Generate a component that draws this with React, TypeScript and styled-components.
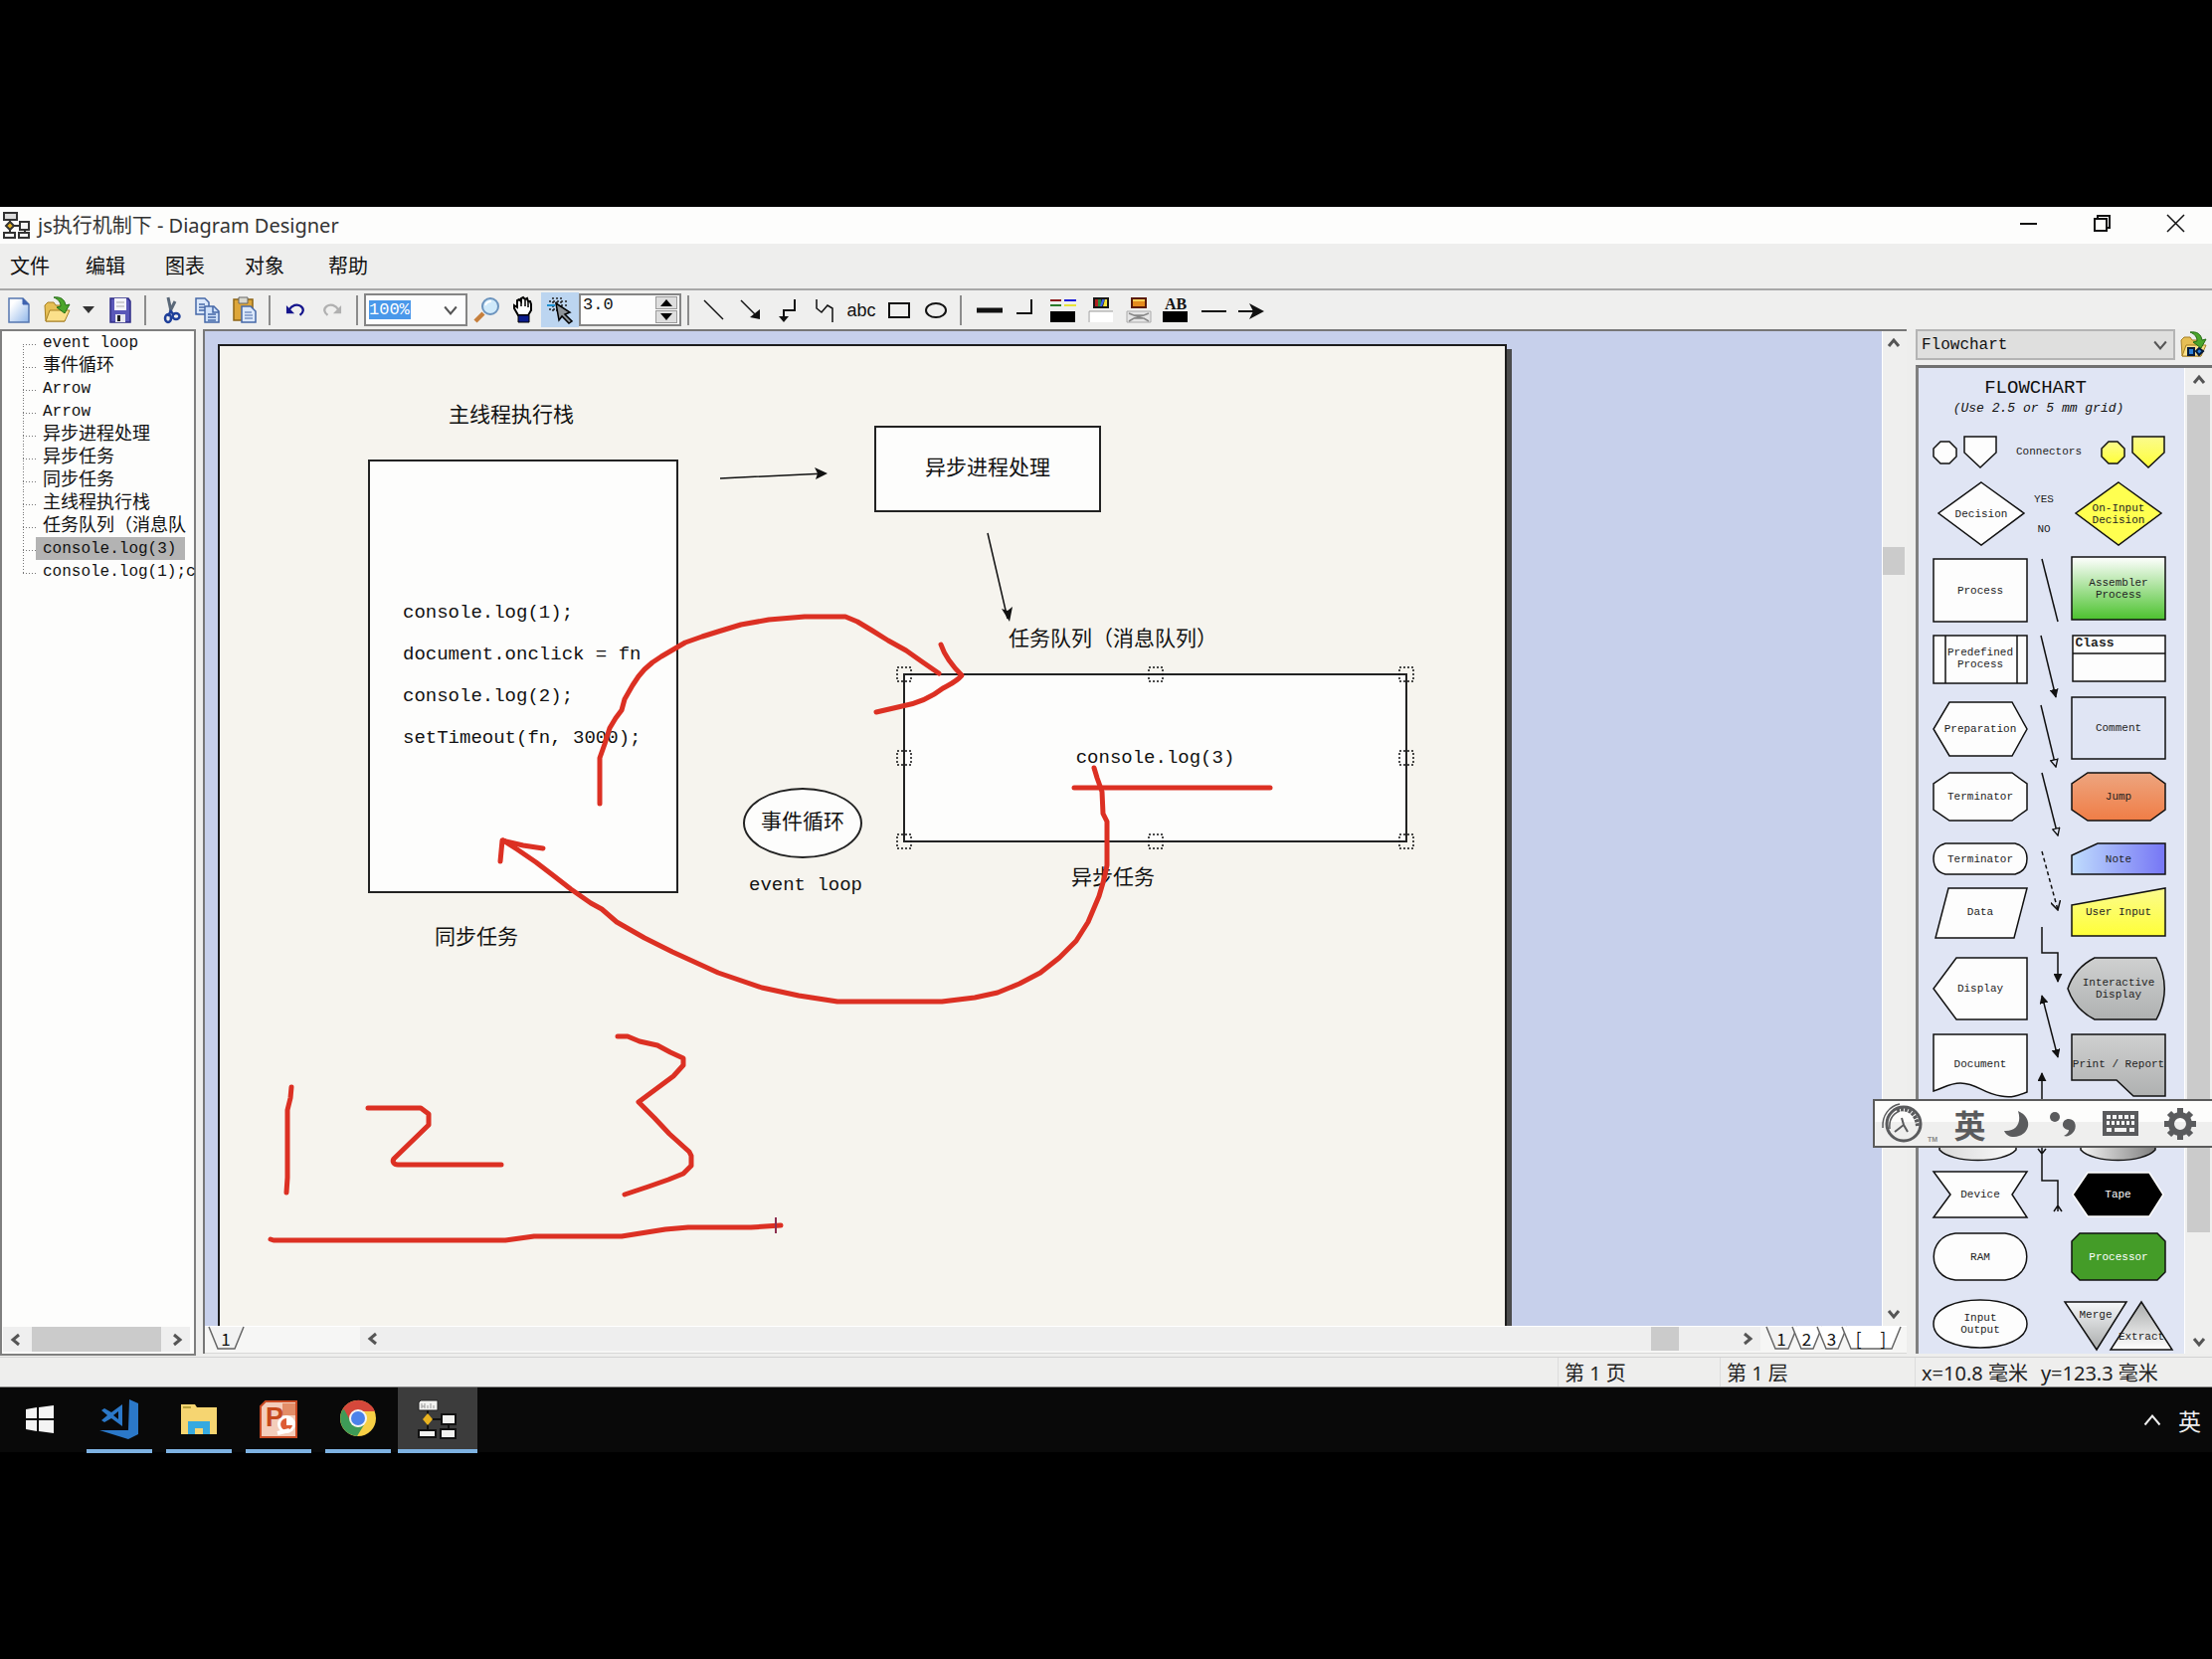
import React from "react";
import styled, { createGlobalStyle } from "styled-components";

const mono = `"Liberation Mono", "Noto Sans CJK SC", monospace`;
const sans = `"Noto Sans", "Noto Sans CJK SC", sans-serif`;

const GlobalStyle = createGlobalStyle`
  * { box-sizing: border-box; }
  body { margin: 0; background: #000; }
  button, input, select { font: inherit; color: inherit; margin: 0; padding: 0; border: 0; border-radius: 0; background: none; outline: none; }
  button { cursor: pointer; }
  svg { display: block; flex: none; overflow: visible; }
`;

/* ---------- shell ---------- */

const Screen = styled.div`
  display: flex;
  flex-direction: column;
  height: 100vh;
  min-height: 900px;
  padding: 208px 0;
  background: #000;
  font-family: ${sans};
  color: #111;
`;

const AppWindow = styled.main`
  position: relative;
  display: flex;
  flex-direction: column;
  flex: 1;
  min-height: 0;
  background: #eeeeed;
`;

const TitleBar = styled.header`
  display: flex;
  align-items: center;
  height: 37px;
  flex: none;
  padding-left: 3px;
  gap: 8px;
  background: #fdfdfc;
`;

const Title = styled.h1`
  flex: 1;
  margin: 0;
  font-size: 20px;
  line-height: 28px;
  font-weight: 400;
  color: #333;
`;

const WindowControls = styled.div`
  display: flex;
  align-self: flex-start;
`;

const WindowButton = styled.button`
  display: flex;
  align-items: center;
  justify-content: center;
  width: 74px;
  height: 32px;
`;

const MenuBar = styled.nav`
  display: flex;
  align-items: center;
  height: 47px;
  flex: none;
  padding: 0 10px;
  border-bottom: 2px solid #a8a8a8;
`;

const MenuItem = styled.button<{ $w: number }>`
  width: ${(p) => p.$w}px;
  text-align: left;
  font-size: 20px;
  line-height: 28px;
`;

/* ---------- toolbar ---------- */

const ToolBar = styled.div`
  display: flex;
  align-items: center;
  height: 39px;
  flex: none;
  background: #efefee;
`;

const Group = styled.div<{ $pad?: number }>`
  display: flex;
  align-items: center;
  padding-left: ${(p) => p.$pad ?? 0}px;
`;

const Tool = styled.button<{ $w?: number; $on?: boolean }>`
  display: flex;
  align-items: center;
  justify-content: center;
  width: ${(p) => p.$w ?? 37}px;
  height: 35px;
  font: 18px/24px "Liberation Sans", sans-serif;
  background: ${(p) => (p.$on ? "#bcd5f0" : "none")};
`;

const Divider = styled.span`
  width: 2px;
  height: 30px;
  margin: 0 6px;
  background: #8c8c8c;
`;

const Field = styled.div<{ $w: number; $pad?: number }>`
  display: flex;
  align-items: center;
  width: ${(p) => p.$w}px;
  height: 33px;
  padding: 0 ${(p) => p.$pad ?? 3}px;
  border: 2px solid #858585;
  background: #fdfdfd;
  font: 17px/20px ${mono};
`;

const ZoomInput = styled.input`
  width: 42px;
  height: 19px;
  background: #4a98ea;
  color: #fff;
`;

const FieldButton = styled.button`
  display: flex;
  align-items: center;
  justify-content: center;
  width: 24px;
  height: 26px;
  margin-left: auto;
`;

const StepInput = styled.input`
  flex: 1;
  min-width: 0;
  height: 20px;
  align-self: flex-start;
`;

const Steps = styled.span`
  display: grid;
  gap: 1px;
`;

const Step = styled.button`
  display: flex;
  align-items: center;
  justify-content: center;
  width: 22px;
  height: 13px;
  border: 1px solid #9a9a9a;
  background: #dedede;
`;

/* ---------- work area ---------- */

const Body = styled.div`
  display: flex;
  flex: 1;
  min-height: 0;
`;

const TreePanel = styled.aside`
  display: flex;
  flex-direction: column;
  width: 197px;
  flex: none;
  margin-bottom: 1px;
  border: 2px solid #7f7f7f;
  background: #fdfdfc;
`;

const Tree = styled.ul`
  flex: 1;
  margin: 0;
  padding: 0 0 0 21px;
  list-style: none;
`;

const TreeItem = styled.li<{ $first?: boolean; $last?: boolean }>`
  display: flex;
  align-items: center;
  height: 23px;
  white-space: pre;
  background:
    linear-gradient(#fdfdfc, #fdfdfc) 0 ${(p) => (p.$first ? "0" : "14px")} / 2px ${(p) => (p.$first ? "13px" : p.$last ? "9px" : "0")} no-repeat,
    repeating-linear-gradient(90deg, #777 0 1px, transparent 1px 3px) 0 13px / 14px 1px no-repeat,
    repeating-linear-gradient(#777 0 1px, transparent 1px 3px) 0 0 / 1px 100% no-repeat;
`;

const TreeLabel = styled.button<{ $cjk?: boolean; $on?: boolean }>`
  height: 23px;
  margin-left: 13px;
  padding: 0 ${(p) => (p.$on ? 9 : 0)}px 0 7px;
  font: ${(p) => (p.$cjk ? 18 : 16)}px/20px ${mono};
  text-align: left;
  white-space: pre;
  background: ${(p) => (p.$on ? "#b3b3b3" : "none")};
`;

const HBar = styled.div`
  display: flex;
  align-items: center;
  justify-content: space-between;
  height: 25px;
  margin: 0 4px 2px 1px;
  background: #efefef;
`;

const Thumb = styled.span<{ $w?: number; $h?: number }>`
  width: ${(p) => (p.$w ? p.$w + "px" : "100%")};
  height: ${(p) => (p.$h ? p.$h + "px" : "100%")};
  flex: none;
  background: #cbcbcb;
`;

const Arrow = styled.button`
  display: flex;
  align-items: center;
  justify-content: center;
  width: 26px;
  height: 24px;
  flex: none;
`;

const Editor = styled.section`
  display: grid;
  grid-template-columns: minmax(0, 1fr) 25px;
  grid-template-rows: minmax(0, 1fr) 28px;
  flex: 1;
  min-width: 0;
  margin: 0 9px 3px 7px;
  border-left: 2px solid #777;
  border-top: 2px solid #777;
`;

const Viewport = styled.div`
  padding: 13px;
  overflow: hidden;
  background: #c7d0eb;
`;

const Page = styled.div`
  position: relative;
  width: 1296px;
  height: 1833px;
  border: 2px solid #1c1c1c;
  background: #f6f4ee;
  box-shadow: 5px 5px 0 #4b4b4c;
`;

const VBar = styled.div`
  display: flex;
  flex-direction: column;
  align-items: center;
  border-left: 1px solid #fff;
  padding-right: 2px;
  background: #efefee;
`;

const Space = styled.span<{ $size?: number }>`
  flex: ${(p) => (p.$size ? `0 0 ${p.$size}px` : "1")};
`;

const TabStrip = styled.div`
  grid-column: 1 / -1;
  display: flex;
  align-items: flex-start;
  border-top: 1px solid #fff;
  border-bottom: 1px solid #d8d8d8;
  background: #f6f6f5;
`;

const SheetTabs = styled.div<{ $w: number; $pad: number }>`
  display: flex;
  width: ${(p) => p.$w}px;
  padding-left: ${(p) => p.$pad}px;
  flex: none;
`;

const TabButton = styled.button<{ $w: number }>`
  position: relative;
  width: ${(p) => p.$w}px;
  height: 23px;
  font: 17px/20px "Noto Sans CJK SC", sans-serif;
  white-space: pre;
`;

const TabShape = styled.svg`
  position: absolute;
  inset: 0;
`;

const TabText = styled.span`
  position: relative;
`;

const SheetScroll = styled.div`
  display: flex;
  align-items: center;
  flex: 1;
  height: 24px;
  background: #eeeeee;
`;

/* ---------- diagram ---------- */

interface Box {
  $x: number;
  $y: number;
  $w: number;
  $h: number;
}

const Node = styled.div<Box & { $round?: boolean; $left?: boolean }>`
  position: absolute;
  left: ${(p) => p.$x}px;
  top: ${(p) => p.$y}px;
  width: ${(p) => p.$w}px;
  height: ${(p) => p.$h}px;
  display: flex;
  align-items: center;
  justify-content: ${(p) => (p.$left ? "flex-start" : "center")};
  padding-left: ${(p) => (p.$left ? 33 : 0)}px;
  border: 2px solid #222;
  border-radius: ${(p) => (p.$round ? "50%" : "0")};
  background: #fdfdfc;
`;

const Text = styled.span<{ $cjk?: boolean }>`
  font: ${(p) => (p.$cjk ? 21 : 19)}px/24px ${mono};
  white-space: nowrap;
`;

const Caption = styled(Text)<{ $x: number; $y: number }>`
  position: absolute;
  left: ${(p) => p.$x}px;
  top: ${(p) => p.$y}px;
`;

const Code = styled.pre`
  margin: 0;
  padding-bottom: 3px;
  font: 19px/42px ${mono};
`;

const Overlay = styled.svg`
  position: absolute;
  left: 0;
  top: 0;
`;

/* ---------- palette ---------- */

const Palette = styled.aside`
  display: flex;
  flex-direction: column;
  width: 298px;
  flex: none;
  gap: 5px;
  padding-bottom: 3px;
`;

const PaletteHead = styled.div`
  display: flex;
  align-items: center;
  gap: 5px;
`;

const SelectWrap = styled.label`
  display: grid;
  align-items: center;
  width: 261px;
  height: 31px;
  border: 2px solid #b4b4b4;
  background: #dfdfde;

  & > * { grid-area: 1 / 1; }
  & > svg { justify-self: end; margin-right: 6px; pointer-events: none; }
`;

const Select = styled.select`
  appearance: none;
  width: 100%;
  height: 27px;
  padding-left: 4px;
  font: 16px/24px ${mono};
`;

const PaletteBody = styled.div`
  display: flex;
  flex: 1;
  min-height: 0;
  border-left: 3px solid #808080;
  border-top: 3px solid #707070;
`;

const StencilSheet = styled.div`
  position: relative;
  flex: 1;
  overflow: hidden;
  background: #e0e5f4;
  text-align: center;
`;

const PaletteBar = styled(VBar)`
  width: 28px;
  padding: 0 2px;
`;

const SheetTitle = styled.h2`
  margin: 9px 32px 0 0;
  font: 19px/22px ${mono};
`;

const SheetNote = styled.p`
  margin: 2px 26px 0 0;
  font: italic 13px/16px ${mono};
`;

const Stencil = styled.div<Box & { $color?: string }>`
  position: absolute;
  left: ${(p) => p.$x}px;
  top: ${(p) => p.$y}px;
  width: ${(p) => p.$w}px;
  height: ${(p) => p.$h}px;
  display: flex;
  align-items: center;
  justify-content: center;
  color: ${(p) => p.$color ?? "#222"};
`;

const StencilLabel = styled.span<{ $bold?: boolean; $shift?: number }>`
  position: relative;
  padding-bottom: ${(p) => Math.max(0, -(p.$shift ?? 0) * 2)}px;
  padding-top: ${(p) => Math.max(0, (p.$shift ?? 0) * 2)}px;
  margin: 0 -10px;
  font: ${(p) => (p.$bold ? "bold 13px" : "11px")}/12px ${mono};
  white-space: pre;
`;

/* ---------- floating input bar, status bar, taskbar ---------- */

const InputBar = styled.div`
  position: absolute;
  right: 0;
  bottom: 241px;
  display: flex;
  align-items: center;
  width: 341px;
  height: 49px;
  border: 2px solid #5b5b5b;
  border-right: 0;
  background: linear-gradient(#fdfdfc 46%, #efefee 46%);
  color: #5a5b5d;
`;

const InputKey = styled.button<{ $w: number }>`
  display: flex;
  align-items: center;
  justify-content: center;
  width: ${(p) => p.$w}px;
  height: 44px;
  font: bold 32px/40px "Noto Sans CJK SC", sans-serif;
`;

const StatusBar = styled.footer`
  display: flex;
  justify-content: flex-end;
  height: 31px;
  flex: none;
  border-top: 1px solid #d2d2d2;
  border-bottom: 1px solid #888;
  font: 20px/32px ${sans};
  color: #222;
`;

const StatusCell = styled.span<{ $w: number }>`
  display: flex;
  gap: 13px;
  width: ${(p) => p.$w}px;
  padding-left: 6px;
  border-left: 1px solid #dcdcdc;
  white-space: pre;
`;

const TaskBar = styled.footer`
  display: flex;
  height: 65px;
  flex: none;
  background: #090909;
  color: #eee;
`;

const Task = styled.button<{ $open?: boolean; $active?: boolean }>`
  display: grid;
  grid-template-rows: 61px 4px;
  justify-items: center;
  align-items: center;
  width: 80px;
  padding-top: 1px;
  background: ${(p) => (p.$active ? "#3c3c3c" : "none")};

  &::after {
    content: "";
    width: ${(p) => (p.$active ? "80px" : "66px")};
    height: 4px;
    background: ${(p) => (p.$open || p.$active ? "#7db2e2" : "none")};
  }
`;

const Tray = styled.div`
  display: flex;
  align-items: center;
  gap: 17px;
  margin-left: auto;
  padding-right: 11px;
  font: 23px/30px "Noto Sans CJK SC", sans-serif;
`;

/* ---------- small drawings ---------- */

const Chevron = ({ dir, color = "#555", size = 12, weight = 3 }: { dir: "up" | "down" | "left" | "right"; color?: string; size?: number; weight?: number }) => {
  const d = { up: "M1 9L6 3L11 9", down: "M1 3L6 9L11 3", left: "M9 1L3 6L9 11", right: "M3 1L9 6L3 11" }[dir];
  return (
    <svg width={size} height={size} viewBox="0 0 12 12">
      <path d={d} fill="none" stroke={color} strokeWidth={weight} vectorEffect="non-scaling-stroke" />
    </svg>
  );
};

const Line = ({ w, h, d, sw = 2, children }: { w: number; h: number; d?: string; sw?: number; children?: React.ReactNode }) => (
  <svg width={w} height={h} viewBox={`0 0 ${w} ${h}`} fill="none" stroke="#111" strokeWidth={sw}>
    {d && <path d={d} />}
    {children}
  </svg>
);

const AppLogo = () => (
  <svg width="27" height="27" viewBox="0 0 27 27" fill="#f4f4f4" stroke="#333" strokeWidth="2">
    <path d="M1 1H14V8H1Z" fill="#ddd" />
    <path d="M7 8V20M7 14H18M22 17V21" />
    <path d="M7 10L11 14L7 18L3 14Z" fill="#e9b320" />
    <path d="M17 10H26V18H17ZM1 21H12V26H1ZM16 21H26V26H16Z" />
  </svg>
);

const NewIcon = () => (
  <svg width="22" height="26" viewBox="0 0 22 26">
    <defs>
      <linearGradient id="sheet" x1="0" y1="0" x2="1" y2="1">
        <stop offset="0.2" stopColor="#fff" />
        <stop offset="1" stopColor="#8fb6ea" />
      </linearGradient>
    </defs>
    <path d="M1 1H15L21 7V25H1Z" fill="url(#sheet)" stroke="#5577b0" strokeWidth="1.5" />
    <path d="M15 1V7H21" fill="#3e63b0" stroke="#3e63b0" />
  </svg>
);

const FolderIcon = ({ badge }: { badge?: boolean }) => (
  <svg width="27" height="27" viewBox="0 0 27 27">
    <path d="M1 9L4 6H10L12 9H21V25H2Z" fill="#e6bf55" stroke="#a57f22" />
    <path d="M6 14H26L21 25H2Z" fill="#fbe08a" stroke="#a57f22" />
    <path d="M10 1C17 0 21 3 22 9L26 8L21 17L13 11L17 10C17 6 15 3 10 1Z" fill="#4ba52b" stroke="#256d16" />
    {badge && (
      <g stroke="#061a3a" strokeWidth="2" fill="#2b7fd8">
        <path d="M8 17H14V24H8Z" />
        <path d="M19 17L23 20L19 24L16 20Z" />
      </g>
    )}
  </svg>
);

const SaveIcon = () => (
  <svg width="22" height="26" viewBox="0 0 22 26">
    <path d="M1 1H19L21 4V25H1Z" fill="#5a58b8" stroke="#2f2d86" strokeWidth="1.5" />
    <path d="M5 1H17V13H5Z" fill="#f4f4fa" />
    <path d="M7 5H15M7 9H15" stroke="#aaa" />
    <path d="M6 17H16V25H6Z" fill="#e8e8f0" />
    <path d="M8 18H11V24H8Z" fill="#222" />
  </svg>
);

const CutIcon = () => (
  <svg width="20" height="26" viewBox="0 0 20 26" fill="none">
    <path d="M7 0L10 14M14 4L9 14" stroke="#5a6878" strokeWidth="3" />
    <path d="M9 13L13 18M10 13L7 19" stroke="#1e3f9a" strokeWidth="2.5" />
    <ellipse cx="7" cy="21" rx="3" ry="4" stroke="#1e3f9a" strokeWidth="2.5" />
    <ellipse cx="15" cy="19" rx="3.5" ry="3" stroke="#1e3f9a" strokeWidth="2.5" />
  </svg>
);

const CopyIcon = () => (
  <svg width="25" height="26" viewBox="0 0 25 26" stroke="#4668a8" strokeWidth="1.5">
    <path d="M1 1H10L14 5V17H1Z" fill="#dbe8fb" />
    <path d="M4 7H10M4 10H11M4 13H11" />
    <path d="M10 9H19L24 14V25H10Z" fill="#cfe1fa" />
    <path d="M18 9V15H24M13 17H21M13 20H21M13 23H21" fill="none" />
  </svg>
);

const PasteIcon = () => (
  <svg width="24" height="27" viewBox="0 0 24 27">
    <path d="M1 3H20V24H1Z" fill="#dda63a" stroke="#8e6516" strokeWidth="1.5" />
    <path d="M6 1H15V7H6Z" fill="#d9d9d0" stroke="#666" />
    <path d="M9 10H18L23 15V26H9Z" fill="#dbe8fb" stroke="#4668a8" strokeWidth="1.5" />
    <path d="M12 16H19M12 19H20M12 22H20" stroke="#4668a8" />
  </svg>
);

const TurnIcon = ({ color, flip }: { color: string; flip?: boolean }) => (
  <svg width="20" height="13" viewBox="0 0 22 14" transform={flip ? "scale(-1 1)" : undefined}>
    <path d="M4 7C7 2 13 0 17 3C21 6 20 10 16 13" fill="none" stroke={color} strokeWidth="2.5" />
    <path d="M1 2V11H10Z" fill={color} />
  </svg>
);

const LensIcon = () => (
  <svg width="26" height="26" viewBox="0 0 26 26">
    <path d="M10 16L2 24" stroke="#c67f3c" strokeWidth="4.5" />
    <circle cx="17" cy="9" r="8" fill="#cfe9fa" stroke="#6b93bd" strokeWidth="2" />
    <path d="M12 8C13 5 15 4 18 4" stroke="#fff" strokeWidth="2" fill="none" />
  </svg>
);

const HandIcon = () => (
  <svg width="20" height="27" viewBox="0 0 20 27">
    <path d="M5 19L1 12V9L4 11V4L6 3L8 5V2L10 1L12 3L14 2L15 5L17 5L18 8V14L15 19Z" fill="#fff" stroke="#000" strokeWidth="2" />
    <path d="M8 5V10M12 4V10M15 6V11" stroke="#000" strokeWidth="1.5" />
    <path d="M5 19H16V26H5Z" fill="#0b1c8c" stroke="#000" />
  </svg>
);

const SnapIcon = () => (
  <svg width="26" height="26" viewBox="0 0 26 26">
    <path d="M6 0V16M10 0V16M14 0V12M2 4H20M2 8H20M2 12H14" stroke="#222" strokeWidth="1.5" strokeDasharray="2 2" />
    <path d="M9 6L23 15L18 17L25 24L22 26L15 19L12 23Z" fill="#8e9499" stroke="#000" strokeWidth="1.5" />
    <path d="M0 8H8" stroke="#1b8fd0" strokeWidth="2" />
  </svg>
);

const RibbonIcon = ({ kind }: { kind: "line" | "fill" | "none" | "text" }) => (
  <svg width="26" height="26" viewBox="0 0 26 26">
    {kind === "line" && (
      <>
        <path d="M0 3H11" stroke="#8b1a1a" strokeWidth="2" />
        <path d="M14 3H26" stroke="#1717d8" strokeWidth="2" />
        <path d="M0 8H11" stroke="#2a7a2a" strokeWidth="2" />
        <path d="M14 8H26" stroke="#e8e337" strokeWidth="2" />
      </>
    )}
    {kind === "fill" && (
      <>
        <path d="M5 0H21V11H5Z" fill="#161616" />
        <path d="M7 2H10V9H7Z" fill="#b02020" />
        <path d="M10 2H13V9H10Z" fill="#2a8a3a" />
        <path d="M12 9L14 2H17L14 9Z" fill="#3b63e8" />
        <path d="M15 9L17 2H19V9Z" fill="#f2e23a" />
      </>
    )}
    {kind === "none" && (
      <>
        <path d="M6 1H20V10H6Z" fill="#e58b1e" stroke="#5a1a08" strokeWidth="2" />
        <path d="M7 3H19" stroke="#f8cf58" strokeWidth="2" />
      </>
    )}
    {kind === "text" && (
      <text x="13" y="12" textAnchor="middle" fontFamily="Liberation Serif, serif" fontWeight="bold" fontSize="16" fill="#111">
        AB
      </text>
    )}
    {(kind === "line" || kind === "text") && <path d="M0 14H25V25H0Z" fill="#000" />}
    {kind === "fill" && (
      <>
        <path d="M0 14H25V25H0Z" fill="#fff" />
        <path d="M1 25V14H25" stroke="#999" fill="none" />
      </>
    )}
    {kind === "none" && (
      <>
        <path d="M1 14H25V25H1Z" fill="#e6e6e6" stroke="#aaa" />
        <path d="M3 16L8 18H18L23 16M3 24L8 21H18L23 24M8 18L17 21M18 18L8 21" stroke="#888" strokeWidth="1.5" fill="none" />
      </>
    )}
  </svg>
);

/* ---------- palette data ---------- */

interface StencilData {
  x: number;
  y: number;
  w: number;
  h: number;
  d?: string;
  fill?: string;
  stroke?: string;
  label?: string;
  color?: string;
  shift?: number;
}

const W = "#fdfdfd";
const stencils: StencilData[] = [
  { x: 15, y: 74, w: 23, h: 22, d: "M7 0H16L23 7V15L16 22H7L0 15V7Z", fill: W },
  { x: 46, y: 69, w: 32, h: 31, d: "M0 0H32V16L16 31L0 16Z", fill: W },
  { x: 84, y: 74, w: 94, h: 20, label: "Connectors" },
  { x: 184, y: 74, w: 23, h: 22, d: "M7 0H16L23 7V15L16 22H7L0 15V7Z", fill: "url(#yellow)" },
  { x: 215, y: 69, w: 32, h: 31, d: "M0 0H32V16L16 31L0 16Z", fill: "url(#yellow)" },
  { x: 20, y: 115, w: 86, h: 63, d: "M43 0L86 31L43 63L0 31Z", fill: W, label: "Decision" },
  { x: 106, y: 122, w: 40, h: 20, label: "YES" },
  { x: 106, y: 152, w: 40, h: 20, label: "NO" },
  { x: 158, y: 115, w: 86, h: 63, d: "M43 0L86 31L43 63L0 31Z", fill: "#ffff50", label: "On-Input\nDecision" },
  { x: 15, y: 192, w: 94, h: 63, d: "M0 0H94V63H0Z", fill: W, label: "Process" },
  { x: 154, y: 190, w: 94, h: 63, d: "M0 0H94V63H0Z", fill: "url(#green)", label: "Assembler\nProcess" },
  { x: 15, y: 269, w: 94, h: 48, d: "M0 0H94V48H0ZM12 0V48M84 0V48", fill: W, label: "Predefined\nProcess", shift: -1 },
  { x: 155, y: 269, w: 93, h: 46, d: "M0 0H93V46H0ZM0 18H93", fill: W },
  { x: 15, y: 336, w: 94, h: 54, d: "M16 0H79L94 27L79 54H16L0 27Z", fill: W, label: "Preparation" },
  { x: 154, y: 331, w: 94, h: 62, d: "M0 0H94V62H0Z", fill: "none", label: "Comment" },
  { x: 15, y: 407, w: 94, h: 48, d: "M16 0H79L94 11V37L79 48H16L0 37V11Z", fill: W, label: "Terminator" },
  { x: 154, y: 407, w: 94, h: 48, d: "M16 0H79L94 11V37L79 48H16L0 37V11Z", fill: "url(#orange)", label: "Jump" },
  { x: 15, y: 478, w: 94, h: 31, d: "M12 0H82C90 2 94 8 94 15C94 23 90 29 82 31H12C4 29 0 23 0 15C0 8 4 2 12 0Z", fill: W, label: "Terminator" },
  { x: 154, y: 478, w: 94, h: 31, d: "M0 12L26 0H94V31H0Z", fill: "url(#blue)", label: "Note" },
  { x: 15, y: 523, w: 94, h: 50, d: "M15 0H94L81 50H2Z", fill: W, label: "Data", shift: -1 },
  { x: 154, y: 523, w: 94, h: 48, d: "M0 17L94 0V48H0Z", fill: "url(#yellow)", label: "User Input" },
  { x: 15, y: 593, w: 94, h: 62, d: "M23 0H94V62H23L0 31Z", fill: W, label: "Display" },
  { x: 154, y: 593, w: 94, h: 62, d: "M23 0H85C96 20 96 42 85 62H23C11 56 1 46 -4 31C1 16 11 6 23 0Z", fill: "url(#gray)", label: "Interactive\nDisplay" },
  { x: 15, y: 670, w: 94, h: 60, d: "M0 0H94V58C84 62 78 64 68 62C50 60 44 49 27 49C16 49 10 54 0 57Z", fill: W, label: "Document" },
  { x: 154, y: 670, w: 94, h: 60, d: "M0 0H94V62H62L45 46H0Z", fill: "url(#gray)", label: "Print / Report" },
  { x: 21, y: 756, w: 77, h: 40, d: "M0 0V30C12 44 65 44 77 30V0Z", fill: "url(#tubeLight)" },
  { x: 163, y: 756, w: 75, h: 40, d: "M0 0V30C12 44 63 44 75 30V0Z", fill: "url(#tubeDark)" },
  { x: 15, y: 808, w: 94, h: 46, d: "M0 0H94L79 23L94 46H0L17 23Z", fill: W, label: "Device" },
  { x: 155, y: 809, w: 91, h: 44, d: "M15 0H77L91 22L77 44H15L0 22Z", fill: "#000", stroke: "#fff", label: "Tape", color: "#fff" },
  { x: 15, y: 870, w: 94, h: 47, d: "M22 0H72C101 3 101 44 72 47H22C-7 44 -7 3 22 0Z", fill: W, label: "RAM" },
  { x: 154, y: 870, w: 94, h: 47, d: "M8 0H86L94 8V39L86 47H8L0 39V8Z", fill: "#449c28", label: "Processor", color: "#fff" },
  { x: 15, y: 937, w: 94, h: 48, d: "M0 24C0 -8 94 -8 94 24C94 56 0 56 0 24Z", fill: W, label: "Input\nOutput" },
  { x: 147, y: 939, w: 62, h: 48, d: "M0 0H62L32 48Z", fill: "url(#merge)", label: "Merge", shift: -11 },
  { x: 193, y: 939, w: 62, h: 48, d: "M31 0L62 48H0Z", fill: "url(#extract)", label: "Extract", shift: 11 },
];

const gradients: [string, string, string, boolean][] = [
  ["yellow", "#fbfb8e", "#ffff38", true],
  ["green", "#ffffff", "#4cc22e", true],
  ["orange", "#eda57f", "#f07d46", true],
  ["blue", "#bfdcfd", "#7676f5", false],
  ["gray", "#cfd0d0", "#afb1b1", true],
  ["tubeLight", "#d9d9d9", "#fafafa", false],
  ["tubeDark", "#f4f4f4", "#7f7f7f", false],
  ["merge", "#f6f8fa", "#a9abab", true],
  ["extract", "#a9abab", "#ffffff", true],
];

const StencilLinks = () => (
  <Overlay width="266" height="1000" viewBox="1929 370 266 1000" fill="none" stroke="#111" strokeWidth="1.5">
    <defs>
      {gradients.map(([id, a, b, vertical]) => (
        <linearGradient key={id} id={id} x1="0" y1="0" x2={vertical ? 0 : 1} y2={vertical ? 1 : 0}>
          <stop offset="0" stopColor={a} />
          <stop offset="1" stopColor={b} />
        </linearGradient>
      ))}
      <marker id="solid" viewBox="0 0 10 10" refX="9" refY="5" markerWidth="9" markerHeight="9" markerUnits="userSpaceOnUse" orient="auto-start-reverse">
        <path d="M0 0L10 5L0 10Z" fill="#111" stroke="none" />
      </marker>
      <marker id="hollow" viewBox="0 0 10 10" refX="9" refY="5" markerWidth="9" markerHeight="9" markerUnits="userSpaceOnUse" orient="auto">
        <path d="M1 1L9 5L1 9Z" fill="#e0e5f4" stroke="#111" strokeWidth="1.5" />
      </marker>
      <marker id="open" viewBox="0 0 10 10" refX="9" refY="5" markerWidth="10" markerHeight="10" markerUnits="userSpaceOnUse" orient="auto">
        <path d="M0 0L9 5L0 10" fill="none" stroke="#111" strokeWidth="1.5" />
      </marker>
    </defs>
    <path d="M2053 562L2069 625" />
    <path d="M2052 639L2067 701" markerEnd="url(#solid)" />
    <path d="M2052 709L2067 771" markerEnd="url(#hollow)" />
    <path d="M2053 777L2069 840" markerEnd="url(#hollow)" />
    <path d="M2053 856L2069 915" strokeDasharray="4 3" markerEnd="url(#open)" />
    <path d="M2053 932V958H2069V987" markerEnd="url(#solid)" />
    <path d="M2053 1001L2069 1063" markerStart="url(#solid)" markerEnd="url(#solid)" />
    <path d="M2053 1079V1110" markerStart="url(#solid)" />
    <path d="M2053 1150V1187H2069V1218M2049 1155L2053 1160L2057 1155M2065 1218L2069 1212L2073 1218" />
  </Overlay>
);

const tree: { text: string; cjk?: boolean; on?: boolean }[] = [
  { text: "event loop" },
  { text: "事件循环", cjk: true },
  { text: "Arrow" },
  { text: "Arrow" },
  { text: "异步进程处理", cjk: true },
  { text: "异步任务", cjk: true },
  { text: "同步任务", cjk: true },
  { text: "主线程执行栈", cjk: true },
  { text: "任务队列（消息队", cjk: true },
  { text: "console.log(3)", on: true },
  { text: "console.log(1);c" },
];

const menus: [string, number][] = [["文件", 76], ["编辑", 80], ["图表", 80], ["对象", 84], ["帮助", 84]];

const Tab = ({ w, text, plain }: { w: number; text: string; plain?: boolean }) => (
  <TabButton $w={w}>
    <TabShape width={w} height="23">
      <path d={`M-2 0L7 22H${w - 6}L${w + 3} 0`} fill={plain ? "#f2f2f2" : "#fff"} stroke="#666" strokeWidth="1.5" />
    </TabShape>
    <TabText>{text}</TabText>
  </TabButton>
);

const handles = [909, 1162, 1414].flatMap((x) => [678, 762, 846].map((y) => [x, y])).filter(([x, y]) => !(x === 1162 && y === 762));

const Ink = () => (
  <Overlay width="1292" height="1829" viewBox="221 348 1292 1829" fill="none">
    <g stroke="#111" strokeWidth="1.5">
      <path d="M724 481L830 476M993 536L1013 622" />
      <path d="M832 476L819 470L822 476L820 482ZM1015 625L1007 612L1013 614L1018 610Z" fill="#111" stroke="none" />
      {handles.map(([x, y]) => (
        <rect key={`${x}-${y}`} x={x - 7} y={y - 7} width="14" height="14" strokeDasharray="2 2" />
      ))}
    </g>
    <g stroke="#dc3023" strokeWidth="5" strokeLinecap="round" strokeLinejoin="round">
      <path d="M603 808V762L608 748L613 732L619 722L625 714L628 703L636 689L642 680L648 673L656 666L665 660L677 653L689 646L706 640L722 635L745 628L773 623L809 620H850L862 625L877 634L893 644L911 654L928 666L944 677" />
      <path d="M946 648C950 660 957 669 967 679C961 686 955 688 948 692C934 703 918 708 907 710L881 716" />
      <path d="M1080 792H1277" />
      <path d="M1100 772L1103 782L1108 796L1109 818L1113 826V870L1110 884L1105 901L1094 927L1082 946L1065 963L1046 978L1025 989L1003 998L980 1003L947 1007H842L803 1001L766 993L722 978L676 957L648 943L620 927L605 914L594 908L574 894L556 880L539 867L520 854L506 845" />
      <path d="M503 866L505 845L526 850L546 853" />
      <path d="M293 1093L292 1104L289 1116V1184L288 1199" />
      <path d="M370 1114H423L431 1120V1131L396 1165C394 1168 396 1171 400 1171H504" />
      <path d="M621 1042H631L643 1047L661 1051L674 1058L687 1064V1071L677 1082L642 1108L658 1124L673 1140L693 1158L695 1162V1172L687 1180L672 1186L652 1193L628 1201" />
      <path d="M272 1246L275 1247H508L537 1243H625L669 1236L692 1234H755L785 1232" />
    </g>
    <path d="M780 1224V1240" stroke="#8d2f50" strokeWidth="2" />
  </Overlay>
);

export default function App() {
  return (
    <Screen>
      <GlobalStyle />
      <AppWindow>
        <TitleBar>
          <AppLogo />
          <Title>js执行机制下 - Diagram Designer</Title>
          <WindowControls>
            <WindowButton aria-label="Minimize"><Line w={17} h={17} d="M0 9H17" /></WindowButton>
            <WindowButton aria-label="Restore"><Line w={17} h={17} d="M1 4H13V16H1ZM4 4V1H16V13H13" /></WindowButton>
            <WindowButton aria-label="Close"><Line w={17} h={17} d="M0 0L17 17M17 0L0 17" sw={1.5} /></WindowButton>
          </WindowControls>
        </TitleBar>

        <MenuBar>
          {menus.map(([name, w]) => (
            <MenuItem key={name} $w={w}>{name}</MenuItem>
          ))}
        </MenuBar>

        <ToolBar>
          <Group>
            <Tool $w={38} aria-label="New"><NewIcon /></Tool>
            <Tool $w={38} aria-label="Open"><FolderIcon /></Tool>
            <Tool $w={26} aria-label="Recent files"><svg width="12" height="7"><path d="M0 0H12L6 7Z" fill="#333" /></svg></Tool>
            <Tool aria-label="Save"><SaveIcon /></Tool>
          </Group>
          <Divider />
          <Group>
            <Tool aria-label="Cut"><CutIcon /></Tool>
            <Tool aria-label="Copy"><CopyIcon /></Tool>
            <Tool aria-label="Paste"><PasteIcon /></Tool>
          </Group>
          <Divider />
          <Group>
            <Tool aria-label="Undo"><TurnIcon color="#14148c" /></Tool>
            <Tool aria-label="Redo"><TurnIcon color="#b0b0b0" flip /></Tool>
          </Group>
          <Divider />
          <Field $w={104}>
            <ZoomInput aria-label="Zoom" defaultValue="100%" />
            <FieldButton aria-label="Zoom levels"><Chevron dir="down" size={14} weight={2} /></FieldButton>
          </Field>
          <Group>
            <Tool aria-label="Zoom tool"><LensIcon /></Tool>
            <Tool aria-label="Pan"><HandIcon /></Tool>
            <Tool $w={38} aria-label="Snap to grid" $on><SnapIcon /></Tool>
          </Group>
          <Field $w={103} $pad={2}>
            <StepInput aria-label="Grid size" defaultValue="3.0" />
            <Steps>
              <Step aria-label="Increase"><svg width="12" height="7"><path d="M0 7H12L6 0Z" /></svg></Step>
              <Step aria-label="Decrease"><svg width="12" height="7"><path d="M0 0H12L6 7Z" /></svg></Step>
            </Steps>
          </Field>
          <Divider />
          <Group>
            <Tool aria-label="Line"><Line w={19} h={19} d="M0 0L19 19" sw={1.5} /></Tool>
            <Tool aria-label="Arrow"><Line w={19} h={19} d="M0 0L16 16" sw={1.5}><path d="M19 19V9L9 17Z" fill="#111" stroke="none" /></Line></Tool>
            <Tool aria-label="Connector"><Line w={18} h={24} d="M16 1V12H5V21"><path d="M0 18H10L5 24Z" fill="#111" stroke="none" /></Line></Tool>
            <Tool aria-label="Curve"><Line w={18} h={24} d="M1 1V10L6 14L12 7L17 10V24" sw={1.5} /></Tool>
            <Tool $w={38} aria-label="Text">abc</Tool>
            <Tool aria-label="Rectangle"><Line w={22} h={16} d="M1 1H21V15H1Z" /></Tool>
            <Tool aria-label="Ellipse"><Line w={22} h={16}><ellipse cx="11" cy="8" rx="10" ry="7" /></Line></Tool>
          </Group>
          <Divider />
          <Group $pad={3}>
            <Tool aria-label="Line width"><Line w={26} h={6} d="M0 3H26" sw={5} /></Tool>
            <Tool aria-label="Corner style"><Line w={26} h={24} d="M3 15H18V1" /></Tool>
            <Tool $w={38} aria-label="Line colour"><RibbonIcon kind="line" /></Tool>
            <Tool $w={38} aria-label="Fill colour"><RibbonIcon kind="fill" /></Tool>
            <Tool aria-label="Gradient"><RibbonIcon kind="none" /></Tool>
            <Tool $w={38} aria-label="Text colour"><RibbonIcon kind="text" /></Tool>
            <Tool $w={38} aria-label="Line style"><Line w={25} h={6} d="M0 4H25" /></Tool>
            <Tool aria-label="Arrow style"><Line w={26} h={16} d="M0 9H18"><path d="M26 9L11 1L15 9L11 17Z" fill="#111" stroke="none" /></Line></Tool>
          </Group>
        </ToolBar>

        <Body>
          <TreePanel>
            <Tree>
              {tree.map((t, i) => (
                <TreeItem key={i} $first={i === 0} $last={i === tree.length - 1}>
                  <TreeLabel $cjk={t.cjk} $on={t.on}>{t.text}</TreeLabel>
                </TreeItem>
              ))}
            </Tree>
            <HBar>
              <Arrow aria-label="Scroll left"><Chevron dir="left" /></Arrow>
              <Thumb $w={130} />
              <Arrow aria-label="Scroll right"><Chevron dir="right" /></Arrow>
            </HBar>
          </TreePanel>

          <Editor>
            <Viewport>
              <Page>
                <Caption $cjk $x={230} $y={59}>主线程执行栈</Caption>
                <Node $x={149} $y={114} $w={312} $h={436} $left>
                  <Code>{"console.log(1);\ndocument.onclick = fn\nconsole.log(2);\nsetTimeout(fn, 3000);"}</Code>
                </Node>
                <Caption $cjk $x={216} $y={584}>同步任务</Caption>
                <Node $x={658} $y={80} $w={228} $h={87}><Text $cjk>异步进程处理</Text></Node>
                <Caption $cjk $x={793} $y={284}>任务队列（消息队列）</Caption>
                <Node $x={687} $y={329} $w={507} $h={170}><Text>console.log(3)</Text></Node>
                <Caption $cjk $x={856} $y={524}>异步任务</Caption>
                <Node $x={526} $y={444} $w={120} $h={71} $round><Text $cjk>事件循环</Text></Node>
                <Caption $x={532} $y={530}>event loop</Caption>
                <Ink />
              </Page>
            </Viewport>
            <VBar>
              <Arrow aria-label="Scroll up"><Chevron dir="up" /></Arrow>
              <Space $size={193} />
              <Thumb $h={28} />
              <Space />
              <Arrow aria-label="Scroll down"><Chevron dir="down" /></Arrow>
            </VBar>
            <TabStrip>
              <SheetTabs $w={156} $pad={6}><Tab w={30} text="1" plain /></SheetTabs>
              <SheetScroll>
                <Arrow aria-label="Scroll left"><Chevron dir="left" /></Arrow>
                <Space />
                <Thumb $w={28} />
                <Space $size={56} />
                <Arrow aria-label="Scroll right"><Chevron dir="right" /></Arrow>
              </SheetScroll>
              <SheetTabs $w={147} $pad={8}>
                <Tab w={26} text="1" plain />
                <Tab w={25} text="2" />
                <Tab w={25} text="3" />
                <Tab w={54} text="[     ]" />
              </SheetTabs>
            </TabStrip>
          </Editor>

          <Palette>
            <PaletteHead>
              <SelectWrap>
                <Select aria-label="Template palette" defaultValue="Flowchart">
                  <option>Flowchart</option>
                </Select>
                <Chevron dir="down" size={14} weight={2} />
              </SelectWrap>
              <button aria-label="Load palette"><FolderIcon badge /></button>
            </PaletteHead>
            <PaletteBody>
              <StencilSheet>
                <SheetTitle>FLOWCHART</SheetTitle>
                <SheetNote>(Use 2.5 or 5 mm grid)</SheetNote>
                <StencilLinks />
                {stencils.map((s, i) => (
                  <Stencil key={i} $x={s.x} $y={s.y} $w={s.w} $h={s.h} $color={s.color}>
                    {s.d && (
                      <Overlay width={s.w} height={s.h}>
                        <path d={s.d} fill={s.fill} stroke={s.stroke ?? "#111"} strokeWidth="1.5" />
                      </Overlay>
                    )}
                    {s.label && <StencilLabel $shift={s.shift}>{s.label}</StencilLabel>}
                  </Stencil>
                ))}
                <Stencil $x={156} $y={270} $w={42} $h={14}><StencilLabel $bold>Class</StencilLabel></Stencil>
              </StencilSheet>
              <PaletteBar>
                <Arrow aria-label="Scroll up"><Chevron dir="up" /></Arrow>
                <Space $size={3} />
                <Thumb $h={842} />
                <Space />
                <Arrow aria-label="Scroll down"><Chevron dir="down" /></Arrow>
              </PaletteBar>
            </PaletteBody>
          </Palette>
        </Body>

        <StatusBar>
          <StatusCell $w={163}>第 1 页</StatusCell>
          <StatusCell $w={196}>第 1 层</StatusCell>
          <StatusCell $w={299}><span>x=10.8 毫米</span><span>y=123.3 毫米</span></StatusCell>
        </StatusBar>

        <InputBar>
          <InputKey $w={68} aria-label="Input method">
            <svg width="54" height="40" viewBox="0 0 54 40" fill="none" stroke="#5a5b5d">
              <circle cx="22" cy="20" r="17" strokeWidth="3" />
              <path d="M15 6C28 3 35 11 36 22" strokeWidth="4" strokeDasharray="3 1" />
              <path d="M1 24C0 11 8 2 18 0" strokeWidth="1.5" />
              <path d="M20 14L22 21L13 28M22 21L26 28" strokeWidth="2" />
              <path d="M8 25C7 16 11 10 18 7" strokeWidth="1.5" />
              <text x="46" y="38" fontFamily="Liberation Sans, sans-serif" fontSize="7" fill="#888" stroke="none">TM</text>
            </svg>
          </InputKey>
          <InputKey $w={55}>英</InputKey>
          <InputKey $w={38} aria-label="Half width">
            <svg width="25" height="26" viewBox="0 0 25 26"><path d="M14 0C30 7 26 25 10 26C5 26 2 24 0 20C12 21 18 12 14 0Z" fill="#5a5b5d" /></svg>
          </InputKey>
          <InputKey $w={56} aria-label="Punctuation">
            <svg width="26" height="26" viewBox="0 0 26 26" fill="#5a5b5d"><circle cx="5" cy="6" r="5" /><path d="M19 8C26 8 28 17 23 22C20 25 17 26 14 25C18 23 19 21 19 19C10 18 12 8 19 8Z" /></svg>
          </InputKey>
          <InputKey $w={60} aria-label="Keyboard">
            <svg width="36" height="25" viewBox="0 0 36 25">
              <path d="M0 0H36V25H0Z" fill="#5a5b5d" />
              <path d="M4 6H33" stroke="#f5f5f5" strokeWidth="4" strokeDasharray="4 2" />
              <path d="M4 12H33" stroke="#f5f5f5" strokeWidth="4" strokeDasharray="3 2" />
              <path d="M4 19H9M12 19H24M27 19H32" stroke="#f5f5f5" strokeWidth="4" />
            </svg>
          </InputKey>
          <InputKey $w={60} aria-label="Settings">
            <svg width="32" height="32" viewBox="0 0 32 32" fill="none" stroke="#5a5b5d">
              <circle cx="16" cy="16" r="9" strokeWidth="6" />
              <path d="M16 0V5M16 27V32M0 16H5M27 16H32M5 5L8 8M24 24L27 27M5 27L8 24M24 8L27 5" strokeWidth="6" />
            </svg>
          </InputKey>
        </InputBar>
      </AppWindow>

      <TaskBar>
        <Task aria-label="Start">
          <svg width="28" height="28" viewBox="0 0 28 28" fill="#f4f4f4"><path d="M0 4L11 2V13H0ZM13 2L28 0V13H13ZM0 15H11V26L0 24ZM13 15H28V28L13 26Z" /></svg>
        </Task>
        <Task $open aria-label="Visual Studio Code">
          <svg width="40" height="40" viewBox="0 0 40 40" fill="#2b78c8">
            <path d="M30 0L39 4V35L29 40L0 31H29Z" />
            <path d="M23 5V27L12 19L5 23L2 21L8 16L2 11L5 9L12 13ZM19 12L14 16L19 20Z" fillRule="evenodd" />
          </svg>
        </Task>
        <Task $open aria-label="File Explorer">
          <svg width="36" height="30" viewBox="0 0 36 30">
            <path d="M0 0H14L16 3H36V30H0Z" fill="#f6d571" />
            <path d="M2 3H10" stroke="#b9a23c" strokeWidth="2" />
            <path d="M7 30V17H29V30H22V24H14V30Z" fill="#35a9e0" />
          </svg>
        </Task>
        <Task $open aria-label="PowerPoint">
          <svg width="36" height="36" viewBox="0 0 36 36">
            <path d="M5 0H36V36H0V5Z" fill="#f4cdbb" stroke="#c84a24" strokeWidth="2" />
            <path d="M22 2H35V14H22Z" fill="#e38d68" />
            <circle cx="26" cy="23" r="9" fill="#fff" />
            <path d="M26 17A6 6 0 1 0 32 24H26Z" fill="#dd5c35" />
            <path d="M17 32L29 29" stroke="#fff" strokeWidth="4" />
            <text x="5" y="25" fontFamily="Liberation Sans, sans-serif" fontWeight="bold" fontSize="27" fill="#c64a1c">P</text>
          </svg>
        </Task>
        <Task $open aria-label="Chrome">
          <svg width="37" height="37" viewBox="0 0 37 37">
            <circle cx="18" cy="18" r="18" fill="#f7cf45" />
            <path d="M2 10A18 18 0 0 1 35 11H18A8 8 0 0 0 11 22Z" fill="#d5483b" />
            <path d="M2 10A18 18 0 0 0 17 36L25 23A8 8 0 0 1 11 22L4 9Z" fill="#3e9b57" />
            <circle cx="18" cy="18" r="9" fill="#f4f4f4" />
            <circle cx="18" cy="18" r="7" fill="#4b82ea" />
          </svg>
        </Task>
        <Task $active aria-label="Diagram Designer">
          <svg width="40" height="40" viewBox="0 0 40 40" fill="#f2f2f0">
            <path d="M10 10V31M10 20H26M31 24V31" stroke="#111" strokeWidth="2" />
            <path d="M3 1H20V11H1V3Z" stroke="#222" />
            <path d="M10 14L15 20L10 26L5 20Z" fill="#e9b320" />
            <path d="M24 15H38V25H24ZM1 31H18V38H1ZM23 30H38V39H23Z" stroke="#111" strokeWidth="2" />
            <path d="M4 4V9M4 7H7M7 4V9M10 6V9M13 4V9M16 6V9" stroke="#999" />
          </svg>
        </Task>
        <Tray>
          <Chevron dir="up" color="#eee" size={18} weight={2} />
          <span>英</span>
        </Tray>
      </TaskBar>
    </Screen>
  );
}
